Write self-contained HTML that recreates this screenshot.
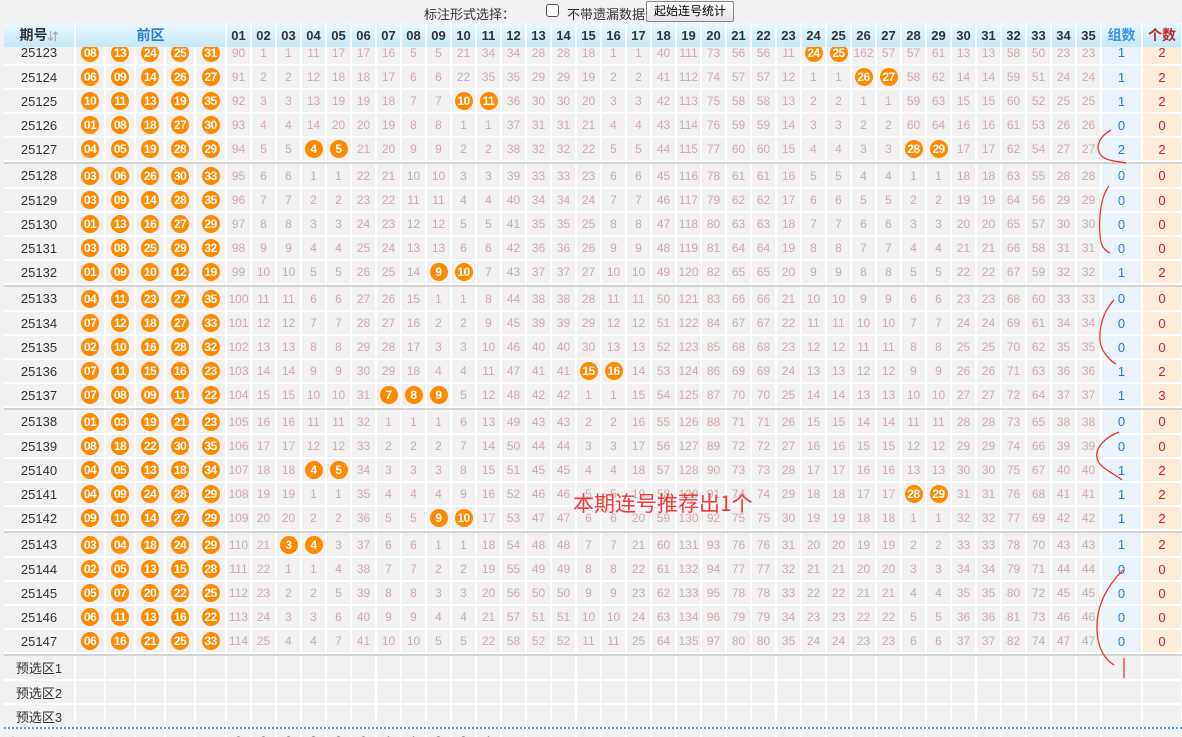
<!DOCTYPE html>
<html><head><meta charset="utf-8"><style>
*{margin:0;padding:0;box-sizing:border-box}
body{width:1182px;height:737px;overflow:hidden;background:#f1f1f1;font-family:"Liberation Sans","Noto Sans CJK SC",sans-serif;position:relative}
.top{position:absolute;left:0;top:0;width:1182px;height:23px;font-size:13px;color:#333}
.top .l{position:absolute;left:424px;top:4px}
.top .cb{position:absolute;left:546px;top:4px;width:13px;height:13px;border:1px solid #555;border-radius:3px;background:#fff}
.top .t2{position:absolute;left:567px;top:4px}
.top .btn{position:absolute;left:646px;top:1px;width:88px;height:21px;border:1px solid #888;border-radius:2px;background:linear-gradient(#fdfdfd,#e4e4e4);font-size:12px;text-align:center;line-height:19px;color:#000}
.wrap{position:absolute;left:4px;top:47px;width:1178px;height:690px;overflow:hidden}
table{border-collapse:collapse;table-layout:fixed;width:1178px}
td{height:24px;border-right:2px solid #fff;border-bottom:2px solid #fff;background:#f1f1f1;text-align:center;font-size:12px;color:#d3a9a9;padding:0;white-space:nowrap;overflow:visible}
td.q{color:#333;font-size:13px}
td.d{border-left:2px solid #c9c9c9}
td.z{background:#eaf3fb;color:#2b7bd6;border-left:2px solid #c9c9c9;font-size:13px}
td.g{background:#fdecd9;color:#b8282a;font-size:13px}
i{display:inline-block;width:18px;height:18px;border-radius:50%;background:#ff8a00;color:#fff;font-style:normal;font-weight:bold;font-size:12px;line-height:18px;vertical-align:middle;letter-spacing:-0.5px}
tr.s td{height:3px;background:#d3d3d3;border:0;padding:0}
.body{position:absolute;left:0;top:-6px}
.head{position:absolute;left:4px;top:23px;width:1178px}
.head td{height:24px;background:linear-gradient(#eaf7fe,#c3e9f9);color:#333;font-weight:bold;font-size:13px;border-bottom:0}
.head td.qh{color:#333;font-size:14px}
.head td.fh{color:#2a7ad6;font-size:14px}
.head td.zh{color:#3c92ea;font-size:14px;border-left:2px solid #c9c9c9}
.head td.gh{color:#b8282a;font-size:14px}
.dot{position:absolute;left:4px;top:727px;width:1178px;border-top:2px dotted #4aa3e0}
.ann{position:absolute;left:573px;top:488px;font-size:21px;color:#f03a3a;font-family:"Noto Sans CJK SC",sans-serif}
svg{position:absolute;left:0;top:0}
</style></head><body>
<div class="top"><span class="l">标注形式选择：</span><span class="cb"></span><span class="t2">不带遗漏数据</span><span class="btn">起始连号统计</span></div>
<div class="wrap"><table class="body">
<colgroup><col style="width:71px"><col style="width:30px"><col style="width:30px"><col style="width:30px"><col style="width:30px"><col style="width:31px"><col span="35" style="width:25px"><col style="width:41px"><col style="width:40px"></colgroup>
<tr><td class="q">25123</td><td><i>08</i></td><td><i>13</i></td><td><i>24</i></td><td><i>25</i></td><td><i>31</i></td><td class="d">90</td><td>1</td><td>1</td><td>11</td><td>17</td><td>17</td><td>16</td><td>5</td><td>5</td><td>21</td><td>34</td><td>34</td><td>28</td><td>28</td><td>18</td><td>1</td><td>1</td><td>40</td><td>111</td><td>73</td><td>56</td><td>56</td><td>11</td><td><i>24</i></td><td><i>25</i></td><td>162</td><td>57</td><td>57</td><td>61</td><td>13</td><td>13</td><td>58</td><td>50</td><td>23</td><td>23</td><td class="z">1</td><td class="g">2</td></tr>
<tr><td class="q">25124</td><td><i>06</i></td><td><i>09</i></td><td><i>14</i></td><td><i>26</i></td><td><i>27</i></td><td class="d">91</td><td>2</td><td>2</td><td>12</td><td>18</td><td>18</td><td>17</td><td>6</td><td>6</td><td>22</td><td>35</td><td>35</td><td>29</td><td>29</td><td>19</td><td>2</td><td>2</td><td>41</td><td>112</td><td>74</td><td>57</td><td>57</td><td>12</td><td>1</td><td>1</td><td><i>26</i></td><td><i>27</i></td><td>58</td><td>62</td><td>14</td><td>14</td><td>59</td><td>51</td><td>24</td><td>24</td><td class="z">1</td><td class="g">2</td></tr>
<tr><td class="q">25125</td><td><i>10</i></td><td><i>11</i></td><td><i>13</i></td><td><i>19</i></td><td><i>35</i></td><td class="d">92</td><td>3</td><td>3</td><td>13</td><td>19</td><td>19</td><td>18</td><td>7</td><td>7</td><td><i>10</i></td><td><i>11</i></td><td>36</td><td>30</td><td>30</td><td>20</td><td>3</td><td>3</td><td>42</td><td>113</td><td>75</td><td>58</td><td>58</td><td>13</td><td>2</td><td>2</td><td>1</td><td>1</td><td>59</td><td>63</td><td>15</td><td>15</td><td>60</td><td>52</td><td>25</td><td>25</td><td class="z">1</td><td class="g">2</td></tr>
<tr><td class="q">25126</td><td><i>01</i></td><td><i>08</i></td><td><i>18</i></td><td><i>27</i></td><td><i>30</i></td><td class="d">93</td><td>4</td><td>4</td><td>14</td><td>20</td><td>20</td><td>19</td><td>8</td><td>8</td><td>1</td><td>1</td><td>37</td><td>31</td><td>31</td><td>21</td><td>4</td><td>4</td><td>43</td><td>114</td><td>76</td><td>59</td><td>59</td><td>14</td><td>3</td><td>3</td><td>2</td><td>2</td><td>60</td><td>64</td><td>16</td><td>16</td><td>61</td><td>53</td><td>26</td><td>26</td><td class="z">0</td><td class="g">0</td></tr>
<tr><td class="q">25127</td><td><i>04</i></td><td><i>05</i></td><td><i>19</i></td><td><i>28</i></td><td><i>29</i></td><td class="d">94</td><td>5</td><td>5</td><td><i>4</i></td><td><i>5</i></td><td>21</td><td>20</td><td>9</td><td>9</td><td>2</td><td>2</td><td>38</td><td>32</td><td>32</td><td>22</td><td>5</td><td>5</td><td>44</td><td>115</td><td>77</td><td>60</td><td>60</td><td>15</td><td>4</td><td>4</td><td>3</td><td>3</td><td><i>28</i></td><td><i>29</i></td><td>17</td><td>17</td><td>62</td><td>54</td><td>27</td><td>27</td><td class="z">2</td><td class="g">2</td></tr>
<tr class="s"><td colspan="43"></td></tr>
<tr><td class="q">25128</td><td><i>03</i></td><td><i>06</i></td><td><i>26</i></td><td><i>30</i></td><td><i>33</i></td><td class="d">95</td><td>6</td><td>6</td><td>1</td><td>1</td><td>22</td><td>21</td><td>10</td><td>10</td><td>3</td><td>3</td><td>39</td><td>33</td><td>33</td><td>23</td><td>6</td><td>6</td><td>45</td><td>116</td><td>78</td><td>61</td><td>61</td><td>16</td><td>5</td><td>5</td><td>4</td><td>4</td><td>1</td><td>1</td><td>18</td><td>18</td><td>63</td><td>55</td><td>28</td><td>28</td><td class="z">0</td><td class="g">0</td></tr>
<tr><td class="q">25129</td><td><i>03</i></td><td><i>09</i></td><td><i>14</i></td><td><i>28</i></td><td><i>35</i></td><td class="d">96</td><td>7</td><td>7</td><td>2</td><td>2</td><td>23</td><td>22</td><td>11</td><td>11</td><td>4</td><td>4</td><td>40</td><td>34</td><td>34</td><td>24</td><td>7</td><td>7</td><td>46</td><td>117</td><td>79</td><td>62</td><td>62</td><td>17</td><td>6</td><td>6</td><td>5</td><td>5</td><td>2</td><td>2</td><td>19</td><td>19</td><td>64</td><td>56</td><td>29</td><td>29</td><td class="z">0</td><td class="g">0</td></tr>
<tr><td class="q">25130</td><td><i>01</i></td><td><i>13</i></td><td><i>16</i></td><td><i>27</i></td><td><i>29</i></td><td class="d">97</td><td>8</td><td>8</td><td>3</td><td>3</td><td>24</td><td>23</td><td>12</td><td>12</td><td>5</td><td>5</td><td>41</td><td>35</td><td>35</td><td>25</td><td>8</td><td>8</td><td>47</td><td>118</td><td>80</td><td>63</td><td>63</td><td>18</td><td>7</td><td>7</td><td>6</td><td>6</td><td>3</td><td>3</td><td>20</td><td>20</td><td>65</td><td>57</td><td>30</td><td>30</td><td class="z">0</td><td class="g">0</td></tr>
<tr><td class="q">25131</td><td><i>03</i></td><td><i>08</i></td><td><i>25</i></td><td><i>29</i></td><td><i>32</i></td><td class="d">98</td><td>9</td><td>9</td><td>4</td><td>4</td><td>25</td><td>24</td><td>13</td><td>13</td><td>6</td><td>6</td><td>42</td><td>36</td><td>36</td><td>26</td><td>9</td><td>9</td><td>48</td><td>119</td><td>81</td><td>64</td><td>64</td><td>19</td><td>8</td><td>8</td><td>7</td><td>7</td><td>4</td><td>4</td><td>21</td><td>21</td><td>66</td><td>58</td><td>31</td><td>31</td><td class="z">0</td><td class="g">0</td></tr>
<tr><td class="q">25132</td><td><i>01</i></td><td><i>09</i></td><td><i>10</i></td><td><i>12</i></td><td><i>19</i></td><td class="d">99</td><td>10</td><td>10</td><td>5</td><td>5</td><td>26</td><td>25</td><td>14</td><td><i>9</i></td><td><i>10</i></td><td>7</td><td>43</td><td>37</td><td>37</td><td>27</td><td>10</td><td>10</td><td>49</td><td>120</td><td>82</td><td>65</td><td>65</td><td>20</td><td>9</td><td>9</td><td>8</td><td>8</td><td>5</td><td>5</td><td>22</td><td>22</td><td>67</td><td>59</td><td>32</td><td>32</td><td class="z">1</td><td class="g">2</td></tr>
<tr class="s"><td colspan="43"></td></tr>
<tr><td class="q">25133</td><td><i>04</i></td><td><i>11</i></td><td><i>23</i></td><td><i>27</i></td><td><i>35</i></td><td class="d">100</td><td>11</td><td>11</td><td>6</td><td>6</td><td>27</td><td>26</td><td>15</td><td>1</td><td>1</td><td>8</td><td>44</td><td>38</td><td>38</td><td>28</td><td>11</td><td>11</td><td>50</td><td>121</td><td>83</td><td>66</td><td>66</td><td>21</td><td>10</td><td>10</td><td>9</td><td>9</td><td>6</td><td>6</td><td>23</td><td>23</td><td>68</td><td>60</td><td>33</td><td>33</td><td class="z">0</td><td class="g">0</td></tr>
<tr><td class="q">25134</td><td><i>07</i></td><td><i>12</i></td><td><i>18</i></td><td><i>27</i></td><td><i>33</i></td><td class="d">101</td><td>12</td><td>12</td><td>7</td><td>7</td><td>28</td><td>27</td><td>16</td><td>2</td><td>2</td><td>9</td><td>45</td><td>39</td><td>39</td><td>29</td><td>12</td><td>12</td><td>51</td><td>122</td><td>84</td><td>67</td><td>67</td><td>22</td><td>11</td><td>11</td><td>10</td><td>10</td><td>7</td><td>7</td><td>24</td><td>24</td><td>69</td><td>61</td><td>34</td><td>34</td><td class="z">0</td><td class="g">0</td></tr>
<tr><td class="q">25135</td><td><i>02</i></td><td><i>10</i></td><td><i>16</i></td><td><i>28</i></td><td><i>32</i></td><td class="d">102</td><td>13</td><td>13</td><td>8</td><td>8</td><td>29</td><td>28</td><td>17</td><td>3</td><td>3</td><td>10</td><td>46</td><td>40</td><td>40</td><td>30</td><td>13</td><td>13</td><td>52</td><td>123</td><td>85</td><td>68</td><td>68</td><td>23</td><td>12</td><td>12</td><td>11</td><td>11</td><td>8</td><td>8</td><td>25</td><td>25</td><td>70</td><td>62</td><td>35</td><td>35</td><td class="z">0</td><td class="g">0</td></tr>
<tr><td class="q">25136</td><td><i>07</i></td><td><i>11</i></td><td><i>15</i></td><td><i>16</i></td><td><i>23</i></td><td class="d">103</td><td>14</td><td>14</td><td>9</td><td>9</td><td>30</td><td>29</td><td>18</td><td>4</td><td>4</td><td>11</td><td>47</td><td>41</td><td>41</td><td><i>15</i></td><td><i>16</i></td><td>14</td><td>53</td><td>124</td><td>86</td><td>69</td><td>69</td><td>24</td><td>13</td><td>13</td><td>12</td><td>12</td><td>9</td><td>9</td><td>26</td><td>26</td><td>71</td><td>63</td><td>36</td><td>36</td><td class="z">1</td><td class="g">2</td></tr>
<tr><td class="q">25137</td><td><i>07</i></td><td><i>08</i></td><td><i>09</i></td><td><i>11</i></td><td><i>22</i></td><td class="d">104</td><td>15</td><td>15</td><td>10</td><td>10</td><td>31</td><td><i>7</i></td><td><i>8</i></td><td><i>9</i></td><td>5</td><td>12</td><td>48</td><td>42</td><td>42</td><td>1</td><td>1</td><td>15</td><td>54</td><td>125</td><td>87</td><td>70</td><td>70</td><td>25</td><td>14</td><td>14</td><td>13</td><td>13</td><td>10</td><td>10</td><td>27</td><td>27</td><td>72</td><td>64</td><td>37</td><td>37</td><td class="z">1</td><td class="g">3</td></tr>
<tr class="s"><td colspan="43"></td></tr>
<tr><td class="q">25138</td><td><i>01</i></td><td><i>03</i></td><td><i>19</i></td><td><i>21</i></td><td><i>23</i></td><td class="d">105</td><td>16</td><td>16</td><td>11</td><td>11</td><td>32</td><td>1</td><td>1</td><td>1</td><td>6</td><td>13</td><td>49</td><td>43</td><td>43</td><td>2</td><td>2</td><td>16</td><td>55</td><td>126</td><td>88</td><td>71</td><td>71</td><td>26</td><td>15</td><td>15</td><td>14</td><td>14</td><td>11</td><td>11</td><td>28</td><td>28</td><td>73</td><td>65</td><td>38</td><td>38</td><td class="z">0</td><td class="g">0</td></tr>
<tr><td class="q">25139</td><td><i>08</i></td><td><i>18</i></td><td><i>22</i></td><td><i>30</i></td><td><i>35</i></td><td class="d">106</td><td>17</td><td>17</td><td>12</td><td>12</td><td>33</td><td>2</td><td>2</td><td>2</td><td>7</td><td>14</td><td>50</td><td>44</td><td>44</td><td>3</td><td>3</td><td>17</td><td>56</td><td>127</td><td>89</td><td>72</td><td>72</td><td>27</td><td>16</td><td>16</td><td>15</td><td>15</td><td>12</td><td>12</td><td>29</td><td>29</td><td>74</td><td>66</td><td>39</td><td>39</td><td class="z">0</td><td class="g">0</td></tr>
<tr><td class="q">25140</td><td><i>04</i></td><td><i>05</i></td><td><i>13</i></td><td><i>18</i></td><td><i>34</i></td><td class="d">107</td><td>18</td><td>18</td><td><i>4</i></td><td><i>5</i></td><td>34</td><td>3</td><td>3</td><td>3</td><td>8</td><td>15</td><td>51</td><td>45</td><td>45</td><td>4</td><td>4</td><td>18</td><td>57</td><td>128</td><td>90</td><td>73</td><td>73</td><td>28</td><td>17</td><td>17</td><td>16</td><td>16</td><td>13</td><td>13</td><td>30</td><td>30</td><td>75</td><td>67</td><td>40</td><td>40</td><td class="z">1</td><td class="g">2</td></tr>
<tr><td class="q">25141</td><td><i>04</i></td><td><i>09</i></td><td><i>24</i></td><td><i>28</i></td><td><i>29</i></td><td class="d">108</td><td>19</td><td>19</td><td>1</td><td>1</td><td>35</td><td>4</td><td>4</td><td>4</td><td>9</td><td>16</td><td>52</td><td>46</td><td>46</td><td>5</td><td>5</td><td>19</td><td>58</td><td>129</td><td>91</td><td>74</td><td>74</td><td>29</td><td>18</td><td>18</td><td>17</td><td>17</td><td><i>28</i></td><td><i>29</i></td><td>31</td><td>31</td><td>76</td><td>68</td><td>41</td><td>41</td><td class="z">1</td><td class="g">2</td></tr>
<tr><td class="q">25142</td><td><i>09</i></td><td><i>10</i></td><td><i>14</i></td><td><i>27</i></td><td><i>29</i></td><td class="d">109</td><td>20</td><td>20</td><td>2</td><td>2</td><td>36</td><td>5</td><td>5</td><td><i>9</i></td><td><i>10</i></td><td>17</td><td>53</td><td>47</td><td>47</td><td>6</td><td>6</td><td>20</td><td>59</td><td>130</td><td>92</td><td>75</td><td>75</td><td>30</td><td>19</td><td>19</td><td>18</td><td>18</td><td>1</td><td>1</td><td>32</td><td>32</td><td>77</td><td>69</td><td>42</td><td>42</td><td class="z">1</td><td class="g">2</td></tr>
<tr class="s"><td colspan="43"></td></tr>
<tr><td class="q">25143</td><td><i>03</i></td><td><i>04</i></td><td><i>18</i></td><td><i>24</i></td><td><i>29</i></td><td class="d">110</td><td>21</td><td><i>3</i></td><td><i>4</i></td><td>3</td><td>37</td><td>6</td><td>6</td><td>1</td><td>1</td><td>18</td><td>54</td><td>48</td><td>48</td><td>7</td><td>7</td><td>21</td><td>60</td><td>131</td><td>93</td><td>76</td><td>76</td><td>31</td><td>20</td><td>20</td><td>19</td><td>19</td><td>2</td><td>2</td><td>33</td><td>33</td><td>78</td><td>70</td><td>43</td><td>43</td><td class="z">1</td><td class="g">2</td></tr>
<tr><td class="q">25144</td><td><i>02</i></td><td><i>05</i></td><td><i>13</i></td><td><i>15</i></td><td><i>28</i></td><td class="d">111</td><td>22</td><td>1</td><td>1</td><td>4</td><td>38</td><td>7</td><td>7</td><td>2</td><td>2</td><td>19</td><td>55</td><td>49</td><td>49</td><td>8</td><td>8</td><td>22</td><td>61</td><td>132</td><td>94</td><td>77</td><td>77</td><td>32</td><td>21</td><td>21</td><td>20</td><td>20</td><td>3</td><td>3</td><td>34</td><td>34</td><td>79</td><td>71</td><td>44</td><td>44</td><td class="z">0</td><td class="g">0</td></tr>
<tr><td class="q">25145</td><td><i>05</i></td><td><i>07</i></td><td><i>20</i></td><td><i>22</i></td><td><i>25</i></td><td class="d">112</td><td>23</td><td>2</td><td>2</td><td>5</td><td>39</td><td>8</td><td>8</td><td>3</td><td>3</td><td>20</td><td>56</td><td>50</td><td>50</td><td>9</td><td>9</td><td>23</td><td>62</td><td>133</td><td>95</td><td>78</td><td>78</td><td>33</td><td>22</td><td>22</td><td>21</td><td>21</td><td>4</td><td>4</td><td>35</td><td>35</td><td>80</td><td>72</td><td>45</td><td>45</td><td class="z">0</td><td class="g">0</td></tr>
<tr><td class="q">25146</td><td><i>06</i></td><td><i>11</i></td><td><i>13</i></td><td><i>16</i></td><td><i>22</i></td><td class="d">113</td><td>24</td><td>3</td><td>3</td><td>6</td><td>40</td><td>9</td><td>9</td><td>4</td><td>4</td><td>21</td><td>57</td><td>51</td><td>51</td><td>10</td><td>10</td><td>24</td><td>63</td><td>134</td><td>96</td><td>79</td><td>79</td><td>34</td><td>23</td><td>23</td><td>22</td><td>22</td><td>5</td><td>5</td><td>36</td><td>36</td><td>81</td><td>73</td><td>46</td><td>46</td><td class="z">0</td><td class="g">0</td></tr>
<tr><td class="q">25147</td><td><i>06</i></td><td><i>16</i></td><td><i>21</i></td><td><i>25</i></td><td><i>33</i></td><td class="d">114</td><td>25</td><td>4</td><td>4</td><td>7</td><td>41</td><td>10</td><td>10</td><td>5</td><td>5</td><td>22</td><td>58</td><td>52</td><td>52</td><td>11</td><td>11</td><td>25</td><td>64</td><td>135</td><td>97</td><td>80</td><td>80</td><td>35</td><td>24</td><td>24</td><td>23</td><td>23</td><td>6</td><td>6</td><td>37</td><td>37</td><td>82</td><td>74</td><td>47</td><td>47</td><td class="z">0</td><td class="g">0</td></tr>
<tr class="s"><td colspan="43"></td></tr>
<tr><td class="q">预选区1</td><td></td><td></td><td></td><td></td><td></td><td class="d"></td><td></td><td></td><td></td><td></td><td></td><td></td><td></td><td></td><td></td><td></td><td></td><td></td><td></td><td></td><td></td><td></td><td></td><td></td><td></td><td></td><td></td><td></td><td></td><td></td><td></td><td></td><td></td><td></td><td></td><td></td><td></td><td></td><td></td><td></td><td class="d"></td><td></td></tr>
<tr><td class="q">预选区2</td><td></td><td></td><td></td><td></td><td></td><td class="d"></td><td></td><td></td><td></td><td></td><td></td><td></td><td></td><td></td><td></td><td></td><td></td><td></td><td></td><td></td><td></td><td></td><td></td><td></td><td></td><td></td><td></td><td></td><td></td><td></td><td></td><td></td><td></td><td></td><td></td><td></td><td></td><td></td><td></td><td></td><td class="d"></td><td></td></tr>
<tr><td class="q">预选区3</td><td></td><td></td><td></td><td></td><td></td><td class="d"></td><td></td><td></td><td></td><td></td><td></td><td></td><td></td><td></td><td></td><td></td><td></td><td></td><td></td><td></td><td></td><td></td><td></td><td></td><td></td><td></td><td></td><td></td><td></td><td></td><td></td><td></td><td></td><td></td><td></td><td></td><td></td><td></td><td></td><td></td><td class="d"></td><td></td></tr>
<tr><td class="q" style="vertical-align:top;padding-top:4px">出现总次数</td><td></td><td></td><td></td><td></td><td></td><td class="d" style="color:#333">0</td><td style="color:#333">0</td><td style="color:#333">2</td><td style="color:#333">3</td><td style="color:#333">2</td><td style="color:#333">0</td><td style="color:#333">1</td><td style="color:#333">1</td><td style="color:#333">3</td><td style="color:#333">3</td><td style="color:#333">1</td><td></td><td></td><td></td><td></td><td></td><td></td><td></td><td></td><td></td><td></td><td></td><td></td><td></td><td></td><td></td><td></td><td></td><td></td><td></td><td></td><td></td><td></td><td></td><td></td><td class="d"></td><td></td></tr>
</table></div>
<table class="head"><colgroup><col style="width:71px"><col style="width:151px"><col span="35" style="width:25px"><col style="width:41px"><col style="width:40px"></colgroup>
<tr><td class="qh">期号<span style="color:#aaa;font-size:11px">⇵</span></td><td class="fh">前区</td><td style="border-left:2px solid #c9c9c9">01</td><td>02</td><td>03</td><td>04</td><td>05</td><td>06</td><td>07</td><td>08</td><td>09</td><td>10</td><td>11</td><td>12</td><td>13</td><td>14</td><td>15</td><td>16</td><td>17</td><td>18</td><td>19</td><td>20</td><td>21</td><td>22</td><td>23</td><td>24</td><td>25</td><td>26</td><td>27</td><td>28</td><td>29</td><td>30</td><td>31</td><td>32</td><td>33</td><td>34</td><td>35</td><td class="zh">组数</td><td class="gh">个数</td></tr></table>
<div class="dot"></div>
<div class="ann">本期连号推荐出1个</div>
<svg width="1182" height="737" fill="none" stroke="#ee3333" stroke-width="1.3">
<path d="M1111 130 C1100 136 1095 146 1100 154 C1106 162 1118 161 1126 163"/>
<path d="M1109 186 C1098 200 1098 235 1102 245 C1104 250 1108 252 1110 253"/>
<path d="M1114 300 C1100 315 1096 340 1104 352 C1108 358 1112 362 1116 364"/>
<path d="M1119 432 C1104 438 1095 448 1097 458 C1099 468 1112 472 1122 480"/>
<path d="M1123 570 C1108 585 1096 605 1097 630 C1098 650 1106 660 1114 665"/>
<path d="M1124 658 L1124 678"/>
</svg>
</body></html>
